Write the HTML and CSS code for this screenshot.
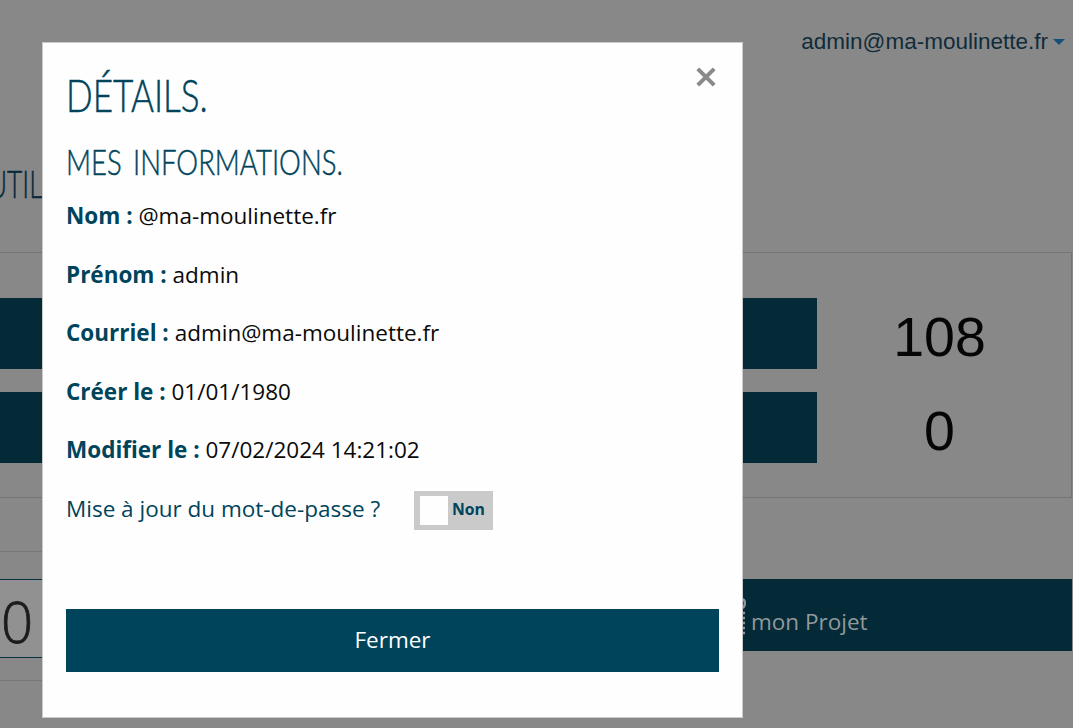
FILE: index.html
```html
<!DOCTYPE html>
<html lang="fr">
<head>
<meta charset="utf-8">
<title>Ma-Moulinette</title>
<link rel="stylesheet" href="styles.css">
</head>
<body>
<div class="page">
  <header class="topbar"><a class="account">admin@ma-moulinette.fr<span class="caret"></span></a></header>
  <h2 class="page-title"><span class="hand hand-page">UTIL</span></h2>
  <section class="stats">
    <div class="stat"><div class="stat-bar"></div><div class="stat-value">108</div></div>
    <div class="stat"><div class="stat-bar"></div><div class="stat-value">0</div></div>
  </section>
  <section class="project">
    <div class="counter-card"><div class="counter">0</div></div>
    <div class="project-button">
      <svg class="comb" width="10" height="40" viewBox="0 0 10 40"><path d="M0 4H6Q9 5 9 8Q9 12 6 13H0M0 18H9M0 23H9M0 28H9M0 33H9M0 38H9" fill="none" stroke="#8f9799" stroke-width="2.4"/></svg>
      <span>mon Projet</span>
    </div>
  </section>
</div>
<div class="modal" role="dialog">
  <button class="close" aria-label="Fermer la fenêtre"><svg width="20" height="20" viewBox="0 0 20 20"><path d="M1.8 1.8L18.2 18.2M18.2 1.8L1.8 18.2" stroke="#8a8a8a" stroke-width="4"/></svg></button>
  <h1 class="title"><span class="hand hand-title">DÉTAILS.</span></h1>
  <h2 class="subtitle"><span class="hand hand-sub">MES INFORMATIONS.</span></h2>
  <p class="row"><strong>Nom :</strong> @ma-moulinette.fr</p>
  <p class="row"><strong>Prénom :</strong> admin</p>
  <p class="row"><strong>Courriel :</strong> admin@ma-moulinette.fr</p>
  <p class="row"><strong>Créer le :</strong> 01/01/1980</p>
  <p class="row"><strong>Modifier le :</strong> 07/02/2024 14:21:02</p>
  <div class="password"><span class="question">Mise à jour du mot-de-passe ?</span><div class="switch"><span class="knob"></span><span class="switch-label">Non</span></div></div>
  <button class="submit">Fermer</button>
</div>
</body>
</html>
```
FILE: styles.css
```css
* { box-sizing: border-box; }
body { margin: 0; background: #888; font: 22.5px/36px "Open Sans", "Noto Sans", sans-serif; overflow: hidden; }
h1, h2, p { margin: 0; font-weight: 300; }
button { font: inherit; border: 0; padding: 0; background: none; }
.page { height: 728px; overflow: hidden; }
.topbar { height: 166px; padding: 23px 8px 0 0; text-align: right; }
.account { font-family: "Liberation Sans", Arial, sans-serif; color: #102c3a; display: inline-flex; align-items: center; }
.caret { margin-left: 5px; border: 6px solid transparent; border-top-color: #145078; border-bottom: 0; }
.hand { display: inline-block; font-family: Lato, sans-serif; font-weight: 300; color: #00445b; white-space: nowrap; transform-origin: 0 50%; -webkit-text-stroke: .5px currentColor; }
.page-title { height: 86px; line-height: 36px; }
.hand-page { margin-left: -12px; font-size: 37px; transform: scaleX(.71); color: #062b3a; }
.stats { width: 1072px; height: 246px; border: 1px solid #747474; border-left: 0; padding-top: 45px; display: flex; flex-direction: column; gap: 23px; }
.stat { display: flex; height: 71px; }
.stat-bar { width: 817px; background: #032a36; }
.stat-value { flex: 1; padding-right: 9px; text-align: center; font: 55.5px/79px "Liberation Sans", Arial, sans-serif; color: #050505; }
.project { display: flex; justify-content: space-between; padding-right: 1px; margin-top: 53px; }
.counter-card { width: 300px; height: 130px; border: solid #777; border-width: 1px 0; padding-top: 27px; }
.counter { height: 79px; border: solid #07303f; border-width: 1px 0; background: #919191; font-size: 56.25px; line-height: 83px; font-weight: 300; -webkit-text-stroke: .8px currentColor; color: #1c1c1c; padding-left: 1px; }
.project-button { margin-top: 28px; width: 372px; height: 72px; background: #032a36; color: #92989b; display: flex; align-items: center; padding: 13px 0 0 36px; }
.comb { margin: -13px 5px 0 0; }
.modal { position: fixed; left: 42px; top: 42px; width: 701px; height: 676px; background: #fefefe; border: 1px solid #cacaca; padding: 23px; }
.close { position: absolute; right: 26px; top: 24px; width: 20px; height: 20px; line-height: 0; }
.title { height: 65px; line-height: 57px; }
.hand-title { font-size: 45px; transform: scaleX(.78); }
.subtitle { height: 67px; line-height: 61px; }
.hand-sub { font-size: 36px; word-spacing: 5px; transform: scaleX(.765); }
.row { height: 58.5px; color: #0a0a0a; font-weight: 400; }
.row strong { color: #00445b; font-weight: 700; }
.password { display: flex; }
.question { width: 348px; color: #00445b; font-weight: 400; }
.switch { width: 79px; height: 39px; background: #cacaca; display: flex; align-items: center; padding-left: 6px; gap: 4px; }
.knob { width: 28px; height: 29px; background: #fefefe; }
.switch-label { font-size: 15.75px; font-weight: 700; color: #00445b; margin-top: -2px; }
.submit { display: block; width: 653px; height: 63px; margin-top: 79px; background: #00445b; color: #fefefe; }
```
